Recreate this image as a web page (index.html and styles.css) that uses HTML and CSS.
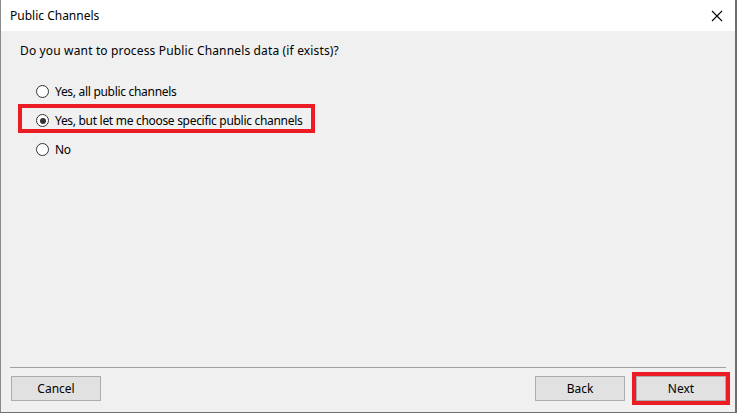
FILE: index.html
```html
<!DOCTYPE html>
<html lang="en">
<head>
    <meta charset="UTF-8">
    <meta name="viewport" content="width=device-width, initial-scale=1.0">
    <title>Public Channels</title>
    <link rel="stylesheet" href="styles.css">
</head>

<body>
    <div class="window">
        <div class="titlebar">
            <span class="title">Public Channels</span>
            <span class="close">
                <svg width="12" height="12" viewBox="0 0 12 12">
                    <path d="M1 1 L11 11 M11 1 L1 11" stroke="#000" stroke-width="1.1" fill="none"/>
                </svg>
            </span>
        </div>

        <div class="content">
            <p class="question">Do you want to process Public Channels data (if exists)?</p>

            <div class="options">
                <label class="option">
                    <span class="radio"></span>
                    Yes, all public channels
                </label>
                <label class="option marked">
                    <span class="radio checked"></span>
                    Yes, but let me choose specific public channels
                </label>
                <label class="option">
                    <span class="radio"></span>
                    No
                </label>
            </div>
        </div>

        <div class="footer">
            <div class="separator"></div>
            <div class="buttons">
                <button class="btn">Cancel</button>
                <div class="right">
                    <button class="btn">Back</button>
                    <button class="btn marked-btn">Next</button>
                </div>
            </div>
        </div>
    </div>
</body>
</html>
```
FILE: styles.css
```css
html, body {
    margin: 0;
    height: 100%;
}

body {
    font-family: "Noto Sans", "Open Sans", Arial, sans-serif;
    font-size: 12px;
    color: #000;
    background-color: #f0f0f0;
}

.window {
    height: 100%;
    box-sizing: border-box;
    display: flex;
    flex-direction: column;
    border-left: 1px solid #8a8a8a;
    border-right: 2px solid #6e6e6e;
    border-bottom: 1px solid #6e6e6e;
    background-color: #f0f0f0;
}

.titlebar {
    height: 31px;
    flex-shrink: 0;
    background-color: #fff;
    display: flex;
    align-items: center;
    justify-content: space-between;
    padding: 0 12px 0 9px;
}

.close {
    display: flex;
    margin-top: 1px;
}

.content {
    flex: 1;
    padding: 12px 0 0 19px;
}

.question {
    margin: 0;
    line-height: 16px;
    letter-spacing: 0.15px;
}

.options {
    display: flex;
    flex-direction: column;
    align-items: flex-start;
    margin: 20px 0 0 2px;
    gap: 8px;
}

.option {
    display: flex;
    align-items: center;
    gap: 6px;
    height: 21px;
    box-sizing: border-box;
    padding: 4px 9px 0 14px;
    letter-spacing: -0.3px;
}

.option.marked {
    outline: 4px solid #ec1c24;
}

.radio {
    width: 11px;
    height: 11px;
    border: 1px solid #333;
    border-radius: 50%;
    background-color: #fff;
    position: relative;
    flex-shrink: 0;
}

.radio.checked::after {
    content: "";
    position: absolute;
    left: 2.5px;
    top: 2.5px;
    width: 6px;
    height: 6px;
    border-radius: 50%;
    background-color: #333;
}

.footer {
    padding: 0 9px 11px 9px;
}

.separator {
    border-top: 1px solid #a0a0a0;
    margin-bottom: 8px;
}

.buttons {
    display: flex;
    justify-content: space-between;
    align-items: center;
    padding-left: 1px;
}

.right {
    display: flex;
    gap: 11px;
    align-items: center;
}

.btn {
    width: 90px;
    height: 25px;
    font-family: inherit;
    font-size: 12px;
    background-color: #e1e1e1;
    border: 1px solid #adadad;
    padding: 0;
    color: #000;
}

.marked-btn {
    outline: 4px solid #ec1c24;
    outline-offset: 0;
}
```
